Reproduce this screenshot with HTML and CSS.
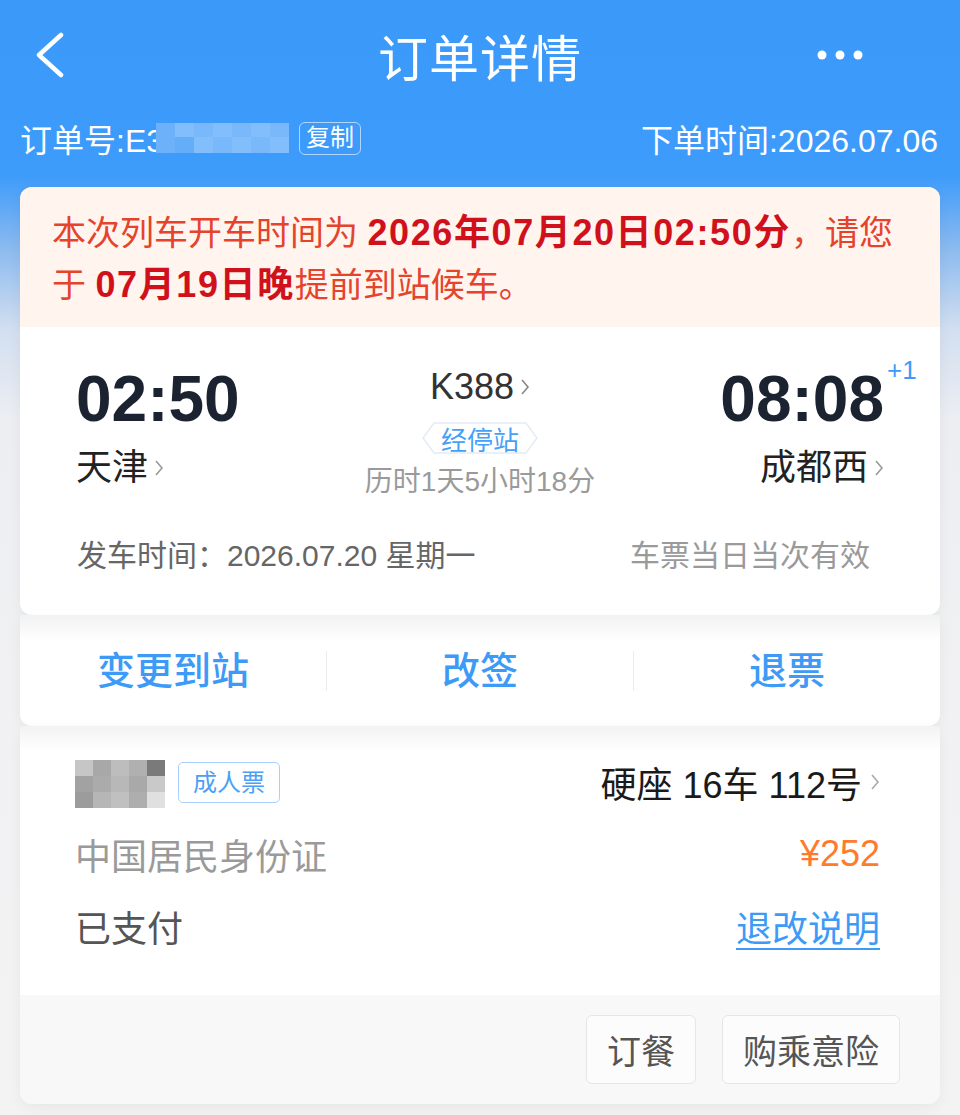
FILE: index.html
```html
<!DOCTYPE html>
<html lang="zh-CN">
<head>
    <meta charset="UTF-8">
    <meta name="viewport" content="width=device-width, initial-scale=1.0">
    <title>订单详情</title>
    <link rel="stylesheet" href="styles.css">
</head>
<body>

    <!-- Шапка -->
    <header class="nav">
        <svg class="back" width="30" height="46" viewBox="0 0 30 46"><polyline points="26,3 4,23 26,43" fill="none" stroke="#fff" stroke-width="4.5" stroke-linecap="round" stroke-linejoin="round"/></svg>
        <h1>订单详情</h1>
        <svg class="more" width="46" height="10" viewBox="0 0 46 10"><circle cx="5" cy="5" r="4.5" fill="#fff"/><circle cx="23" cy="5" r="4.5" fill="#fff"/><circle cx="41" cy="5" r="4.5" fill="#fff"/></svg>
    </header>

    <div class="order-meta">
        <div class="order-no">订单号:E3<span class="blur-no"><i></i><i></i><i></i><i></i><i></i><i></i><i></i><i></i><i></i><i></i><i></i><i></i><i></i><i></i></span><span class="copy">复制</span></div>
        <div class="order-time">下单时间:2026.07.06</div>
    </div>

    <main class="content">

        <!-- Поезд -->
        <section class="trip-card">
            <div class="notice">本次列车开车时间为 <b>2026年07月20日02:50分</b>，请您<br>于 <b>07月19日晚</b>提前到站候车。</div>

            <div class="trip">
                <div class="trip-main">
                    <div class="end">
                        <div class="time">02:50</div>
                        <div class="station">天津<svg class="chev" width="10" height="18" viewBox="0 0 10 18"><polyline points="2,2 8,9 2,16" fill="none" stroke="#999" stroke-width="1.6"/></svg></div>
                    </div>
                    <div class="mid">
                        <div class="train">K388<svg class="chev" width="10" height="18" viewBox="0 0 10 18"><polyline points="2,2 8,9 2,16" fill="none" stroke="#888" stroke-width="1.6"/></svg></div>
                        <div class="stops">
                            <svg class="hex" width="116" height="32" viewBox="0 0 116 32"><polygon points="12,1 104,1 115,16 104,31 12,31 1,16" fill="#fff" stroke="#e3ebf5" stroke-width="1.5"/></svg>
                            <span>经停站</span>
                        </div>
                        <div class="duration">历时1天5小时18分</div>
                    </div>
                    <div class="end arr">
                        <div class="time">08:08<span class="plus">+1</span></div>
                        <div class="station">成都西<svg class="chev" width="10" height="18" viewBox="0 0 10 18"><polyline points="2,2 8,9 2,16" fill="none" stroke="#999" stroke-width="1.6"/></svg></div>
                    </div>
                </div>
                <div class="trip-foot">
                    <span>发车时间：2026.07.20 星期一</span>
                    <span class="valid">车票当日当次有效</span>
                </div>
            </div>
        </section>

        <!-- Действия -->
        <section class="actions">
            <a class="action">变更到站</a>
            <a class="action">改签</a>
            <a class="action">退票</a>
        </section>

        <!-- Пассажир -->
        <section class="ticket">
            <div class="ticket-body">
                <div class="row">
                    <div class="who">
                        <span class="mosaic"><i></i><i></i><i></i><i></i><i></i><i></i><i></i><i></i><i></i><i></i><i></i><i></i><i></i><i></i><i></i></span>
                        <span class="tag">成人票</span>
                    </div>
                    <div class="seat">硬座 16车 112号<svg class="chev" width="10" height="18" viewBox="0 0 10 18"><polyline points="2,2 8,9 2,16" fill="none" stroke="#aaa" stroke-width="1.6"/></svg></div>
                </div>
                <div class="row">
                    <span class="idtype">中国居民身份证</span>
                    <span class="price">¥252</span>
                </div>
                <div class="row">
                    <span class="paid">已支付</span>
                    <a class="rule">退改说明</a>
                </div>
            </div>
            <div class="ticket-foot">
                <button class="btn">订餐</button>
                <button class="btn">购乘意险</button>
            </div>
        </section>

    </main>

</body>
</html>
```

FILE: styles.css
```css
/* Основа */
body {
    margin: 0;
    min-height: 1115px;
    font-family: "Liberation Sans", "Noto Sans CJK SC", sans-serif;
    background: linear-gradient(180deg, #3b99fa 0, #3d9bfa 175px, #8dbbef 250px, #d3dff0 330px, #eceef2 420px, #f1f1f3 700px, #f3f3f3 100%);
}

/* Шапка */
.nav {
    height: 110px;
    display: grid;
    grid-template-columns: 1fr auto 1fr;
    align-items: center;
    padding: 0 35px;
}

.nav h1 {
    margin: 0;
    font-size: 50px;
    font-weight: 400;
    color: #fff;
    letter-spacing: 1px;
}

.nav .more {
    justify-self: end;
    margin-right: 62px;
}

.order-meta {
    display: flex;
    justify-content: space-between;
    align-items: center;
    height: 46px;
    margin: 5px 0 26px;
    padding: 0 22px 0 20px;
    color: #fff;
    font-size: 32px;
}

.order-no {
    display: flex;
    align-items: center;
}

.blur-no {
    display: inline-grid;
    grid-template-columns: repeat(7, 19px);
    grid-template-rows: 14px 16px;
    margin-left: -8px;
}

.blur-no i:nth-child(odd) { background: #78b8fb; }
.blur-no i:nth-child(even) { background: #82befc; }
.blur-no i:nth-child(1), .blur-no i:nth-child(8) { background: #6cb1fa; }
.blur-no i:nth-child(9) { background: #64adf9; }

.copy {
    margin-left: 10px;
    height: 31px;
    line-height: 30px;
    padding: 0 6px;
    font-size: 24px;
    border: 1.5px solid rgba(255, 255, 255, 0.6);
    border-radius: 6px;
}

/* Карточки */
.content {
    padding: 0 20px;
}

.trip-card {
    background: #fff;
    border-radius: 12px;
    overflow: hidden;
    box-shadow: 0 4px 14px rgba(0, 0, 0, 0.05);
}

.notice {
    background: #fff4ee;
    padding: 20px 30px 16px 32px;
    font-size: 34px;
    line-height: 51px;
    color: #e4432c;
}

.notice b {
    color: #d0111b;
    font-size: 36px;
    letter-spacing: 1.6px;
}

.trip {
    padding: 34px 56px 39px 56px;
}

.trip-main {
    display: grid;
    grid-template-columns: 1fr auto 1fr;
}

.time {
    font-size: 64px;
    font-weight: 700;
    line-height: 76px;
    color: #1b2230;
    position: relative;
    display: inline-block;
}

.plus {
    position: absolute;
    left: 100%;
    top: -6px;
    margin-left: 3px;
    font-size: 26px;
    font-weight: 400;
    line-height: 30px;
    color: #3d9bf7;
}

.station {
    font-size: 36px;
    line-height: 62px;
    color: #222;
    display: flex;
    align-items: center;
}

.chev {
    margin-left: 6px;
}

.end.arr {
    text-align: right;
    display: flex;
    flex-direction: column;
    align-items: flex-end;
}

.mid {
    display: flex;
    flex-direction: column;
    align-items: center;
}

.train {
    font-size: 36px;
    line-height: 52px;
    color: #333;
    display: flex;
    align-items: center;
}

.stops {
    position: relative;
    width: 116px;
    height: 32px;
    margin-top: 9px;
    display: flex;
    align-items: center;
    justify-content: center;
    font-size: 26px;
    color: #47a0f7;
}

.stops .hex {
    position: absolute;
    left: 0;
    top: 0;
}

.stops span {
    position: relative;
}

.duration {
    margin-top: 10px;
    font-size: 28px;
    line-height: 36px;
    color: #9a9a9a;
}

.trip-foot {
    display: flex;
    justify-content: space-between;
    margin: 36px 14px 0 1px;
    font-size: 30px;
    line-height: 40px;
    color: #666;
}

.trip-foot .valid {
    color: #9a9a9a;
}

/* Кнопки действий */
.actions {
    display: flex;
    align-items: center;
    height: 111px;
    background: linear-gradient(180deg, #f2f2f2 0, #fff 26px);
    border-radius: 0 0 12px 12px;
    box-shadow: 0 4px 14px rgba(0, 0, 0, 0.05);
}

.action {
    flex: 1;
    text-align: center;
    font-size: 38px;
    line-height: 40px;
    font-weight: 500;
    color: #3d9bf7;
}

.action + .action {
    border-left: 1px solid #ececec;
}

/* Билет */
.ticket {
    border-radius: 0 0 12px 12px;
    overflow: hidden;
    box-shadow: 0 4px 14px rgba(0, 0, 0, 0.05);
}

.ticket-body {
    background: linear-gradient(180deg, #f2f2f2 0, #fff 26px);
    padding: 20px 60px 33px 55px;
}

.row {
    display: flex;
    justify-content: space-between;
    align-items: center;
    height: 72px;
    font-size: 36px;
}

.who {
    display: flex;
    align-items: center;
}

.mosaic {
    display: grid;
    grid-template-columns: repeat(5, 18px);
    grid-template-rows: repeat(3, 16px);
    width: 90px;
    margin-top: 4px;
}

.mosaic i { background: #b4b4b4; }
.mosaic i:nth-child(1) { background: #c6c6c6; }
.mosaic i:nth-child(2) { background: #a8a8a8; }
.mosaic i:nth-child(3) { background: #bdbdbd; }
.mosaic i:nth-child(4) { background: #b0b0b0; }
.mosaic i:nth-child(5) { background: #7a7a7a; }
.mosaic i:nth-child(6) { background: #a2a2a2; }
.mosaic i:nth-child(7) { background: #ababab; }
.mosaic i:nth-child(8) { background: #b8b8b8; }
.mosaic i:nth-child(9) { background: #a9a9a9; }
.mosaic i:nth-child(10) { background: #c9c9c9; }
.mosaic i:nth-child(11) { background: #9c9c9c; }
.mosaic i:nth-child(12) { background: #b6b6b6; }
.mosaic i:nth-child(13) { background: #c0c0c0; }
.mosaic i:nth-child(14) { background: #aeaeae; }
.mosaic i:nth-child(15) { background: #e0e0e0; }

.tag {
    margin-left: 13px;
    height: 39px;
    line-height: 39px;
    padding: 0 14px;
    font-size: 24px;
    color: #4aa0f6;
    border: 1.5px solid #a8d0fa;
    border-radius: 5px;
}

.seat {
    display: flex;
    align-items: center;
    font-size: 36px;
    color: #1a1a1a;
}

.seat .chev {
    margin-left: 8px;
    margin-right: 0;
}

.idtype {
    color: #9a9a9a;
}

.price {
    color: #ff7b2c;
}

.paid {
    color: #555;
}

.rule {
    color: #3d9bf7;
    text-decoration: underline;
    text-underline-offset: 6px;
    text-decoration-thickness: 2px;
}

.ticket-foot {
    display: flex;
    justify-content: flex-end;
    gap: 26px;
    padding: 20px 40px 20px;
    background: #f8f8f8;
}

.btn {
    height: 69px;
    padding: 0 20px;
    font-family: inherit;
    font-size: 34px;
    color: #555;
    background: #fcfcfc;
    border: 1.5px solid #e6e6e6;
    border-radius: 6px;
}
```
